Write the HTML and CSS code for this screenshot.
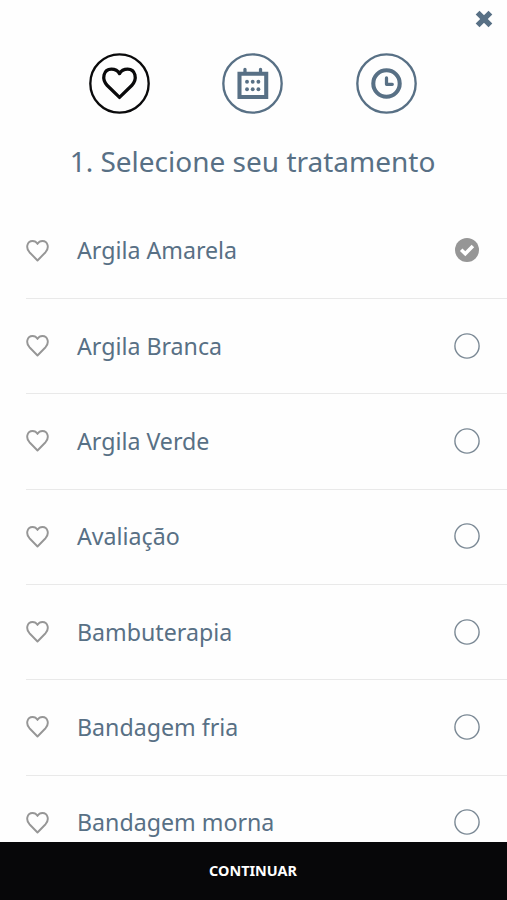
FILE: index.html
```html
<!DOCTYPE html>
<html lang="pt-BR">
<head>
<meta charset="utf-8">
<title>Selecione seu tratamento</title>
<link rel="stylesheet" href="styles.css">
</head>
<body>
<svg class="defs" width="0" height="0">
  <symbol id="heart" viewBox="0 0 24 24"><path d="M12 22.4 L3.6 13.8 C-.6 9 1.2 2.2 6.8 2.1 C9.3 2.1 11 3.4 12 5.1 C13 3.4 14.7 2.1 17.2 2.1 C22.8 2.2 24.6 9 20.4 13.8 Z"/></symbol>
</svg>
<main class="screen">
  <header class="top">
    <button class="close" aria-label="Fechar"><svg width="18" height="18" viewBox="0 0 18 18"><path d="M2.6 2.6 L15.4 15.4 M15.4 2.6 L2.6 15.4"/></svg></button>
  </header>
  <nav class="steps">
    <svg class="step active" viewBox="0 0 60 60"><circle cx="30" cy="30" r="28.7"/><path class="thick" d="M30 43.7 L18 32 C12 25.5 14.2 15.9 22 15.8 C25.8 15.8 28.5 17.5 30 20.3 C31.5 17.5 34.2 15.8 38 15.8 C45.8 15.9 48 25.5 42 32 Z"/></svg>
    <svg class="step" viewBox="0 0 60 60"><circle cx="30" cy="30" r="28.7"/><path class="box" d="M17.2 20.4 H43.5 V43.2 H17.2 Z"/><path class="thick" d="M22.6 20 V16 M37.9 20 V16"/><g class="dots"><circle cx="24.6" cy="28.3" r="1.9"/><circle cx="30.2" cy="28.3" r="1.9"/><circle cx="35.8" cy="28.3" r="1.9"/><circle cx="24.6" cy="35.6" r="1.9"/><circle cx="30.2" cy="35.6" r="1.9"/><circle cx="35.8" cy="35.6" r="1.9"/></g></svg>
    <svg class="step" viewBox="0 0 60 60"><circle cx="30" cy="30" r="28.7"/><circle class="box" cx="30" cy="30" r="13"/><path class="thick" d="M30 24.5 V30.8 H35.7"/></svg>
  </nav>
  <h1 class="title">1. Selecione seu tratamento</h1>
  <ul class="list">
    <li class="row"><svg class="heart"><use href="#heart"/></svg><span class="name">Argila Amarela</span><svg class="check" viewBox="0 0 26 26"><circle cx="13" cy="13" r="12"/><path d="M7.2 12.7 L11.3 16.7 L18.9 9.1"/></svg></li>
    <li class="row"><svg class="heart"><use href="#heart"/></svg><span class="name">Argila Branca</span><svg class="radio" viewBox="0 0 26 26"><circle cx="13" cy="13" r="12.1"/></svg></li>
    <li class="row"><svg class="heart"><use href="#heart"/></svg><span class="name">Argila Verde</span><svg class="radio" viewBox="0 0 26 26"><circle cx="13" cy="13" r="12.1"/></svg></li>
    <li class="row"><svg class="heart"><use href="#heart"/></svg><span class="name">Avaliação</span><svg class="radio" viewBox="0 0 26 26"><circle cx="13" cy="13" r="12.1"/></svg></li>
    <li class="row"><svg class="heart"><use href="#heart"/></svg><span class="name">Bambuterapia</span><svg class="radio" viewBox="0 0 26 26"><circle cx="13" cy="13" r="12.1"/></svg></li>
    <li class="row"><svg class="heart"><use href="#heart"/></svg><span class="name">Bandagem fria</span><svg class="radio" viewBox="0 0 26 26"><circle cx="13" cy="13" r="12.1"/></svg></li>
    <li class="row"><svg class="heart"><use href="#heart"/></svg><span class="name">Bandagem morna</span><svg class="radio" viewBox="0 0 26 26"><circle cx="13" cy="13" r="12.1"/></svg></li>
  </ul>
  <button class="continue">CONTINUAR</button>
</main>
</body>
</html>
```
FILE: styles.css
```css
* { box-sizing: border-box; }
body { margin: 0; background: #fefefe; color: #587085; font-family: "Noto Sans", sans-serif; }
svg { fill: none; stroke-linecap: round; stroke-linejoin: round; }
button { border: 0; padding: 0; font: inherit; }
.defs { display: block; }
.screen { display: flex; flex-direction: column; height: 900px; overflow: hidden; }
.top { display: flex; flex: none; justify-content: flex-end; height: 53px; padding: 10px 14px 0 0; }
.close { width: 18px; height: 18px; background: none; }
.close svg { display: block; stroke: #587085; stroke-width: 5.4; stroke-linecap: butt; }
.steps { display: flex; flex: none; justify-content: space-between; padding: 0 90.5px 0 89px; }
.step { width: 61px; height: 61px; stroke: #587085; stroke-width: 2.3; }
.active { stroke: #0a0a0b; }
.thick { stroke-width: 3.2; }
.box { stroke-width: 4; stroke-linejoin: miter; }
.dots { fill: #587085; stroke: none; }
.title { flex: none; height: 89px; margin: 0; padding: 27px 2px 0 0; font-size: 28px; font-weight: 400; line-height: 40px; text-align: center; white-space: nowrap; }
.list { flex: 1; min-height: 0; margin: 0; padding: .6px 0 0 26px; overflow: hidden; list-style: none; }
.row { display: flex; align-items: center; height: 95.35px; padding: 0 27px 1.2px 0; border-bottom: 1px solid #e9e9e9; }
.heart { flex: none; width: 23px; height: 23px; stroke: #969696; stroke-width: 2; }
.name { flex: 1; margin-left: 28px; font-size: 23.2px; line-height: 32px; white-space: nowrap; }
.check, .radio { flex: none; width: 26px; height: 26px; }
.check { fill: #969696; }
.check path { fill: none; stroke: #fff; stroke-width: 3.6; stroke-linecap: butt; stroke-linejoin: miter; }
.radio { stroke: #7b8995; stroke-width: 1.4; }
.continue { flex: none; height: 58px; padding: 0 1px 2px 0; background: #070709; color: #fff; font-size: 14.4px; font-weight: 700; }
```
